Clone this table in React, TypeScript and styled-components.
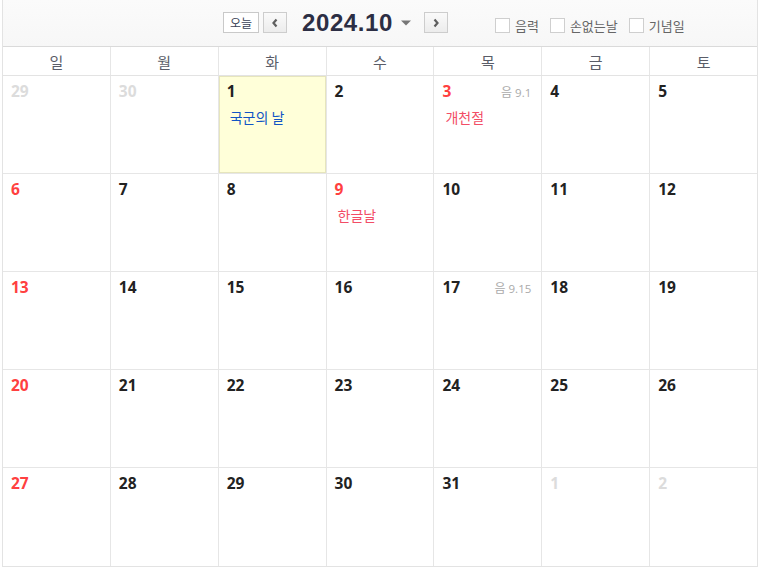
import React from 'react';
import styled, { createGlobalStyle } from 'styled-components';

const Global = createGlobalStyle`
  html, body { margin: 0; padding: 0; background: #fff; }
  body { font-family: "Open Sans", "Noto Sans CJK KR", sans-serif; }
`;

const Page = styled.div`
  padding-left: 2px;
`;

const Calendar = styled.div`
  width: 756px;
  box-sizing: border-box;
  border-left: 1px solid #e3e3e3;
  border-right: 1px solid #e3e3e3;
  border-bottom: 1px solid #e3e3e3;
`;

const Header = styled.div`
  height: 47px;
  box-sizing: border-box;
  border-bottom: 1px solid #dadada;
  background: linear-gradient(#fbfbfb, #f7f7f7);
  display: flex;
  align-items: center;
  padding-left: 220px;
`;

const Nav = styled.div`
  display: flex;
  align-items: center;
  margin-top: -1px;
`;

const TodayButton = styled.button`
  width: 36px;
  height: 21px;
  box-sizing: border-box;
  border: 1px solid #c9c9c9;
  background: #fff;
  font: 12px "Noto Sans CJK KR", sans-serif;
  color: #3a3f55;
  padding: 0;
  line-height: 19px;
  cursor: pointer;
`;

const ArrowButton = styled.button<{ $gap: number }>`
  width: 24px;
  height: 21px;
  box-sizing: border-box;
  border: 1px solid #cdcdcd;
  background: linear-gradient(#fafafa, #ececec);
  margin-left: ${p => p.$gap}px;
  padding: 0;
  display: flex;
  align-items: center;
  justify-content: center;
  cursor: pointer;
`;

const Title = styled.div`
  margin-left: 15px;
  font: 700 24px "Liberation Sans", Arial, sans-serif;
  letter-spacing: 0.6px;
  color: #2c2e44;
  line-height: 28px;
`;

const Caret = styled.span`
  display: flex;
  margin-left: 8px;
`;

const Options = styled.div`
  display: flex;
  align-items: center;
  margin-left: 47px;
  margin-top: 4px;
  gap: 11px;
`;

const Option = styled.label`
  display: flex;
  align-items: center;
  gap: 5px;
  font: 13px "Noto Sans CJK KR", sans-serif;
  color: #666;
`;

const Box = styled.span`
  width: 15px;
  height: 15px;
  box-sizing: border-box;
  border: 1px solid #cfcfcf;
  background: #fff;
  display: inline-block;
`;

const Grid = styled.div<{ $rows: string }>`
  display: grid;
  grid-template-columns: repeat(7, 1fr);
  grid-template-rows: ${p => p.$rows};
  gap: 1px;
  background: #e6e6e6;
`;

const DayNames = styled(Grid)`
  border-bottom: 1px solid #e3e3e3;
`;

const DayName = styled.div`
  background: #fff;
  display: flex;
  align-items: center;
  justify-content: center;
  font: 15px "Noto Sans CJK KR", sans-serif;
  color: #5a5d68;
`;

const Cell = styled.div<{ $today?: boolean }>`
  background: ${p => (p.$today ? '#ffffd9' : '#fff')};
  box-shadow: ${p => (p.$today ? 'inset 0 0 0 1px #e6e5bd' : 'none')};
  padding: 4px 10px 0 8px;
  box-sizing: border-box;
`;

const DateRow = styled.div`
  display: flex;
  justify-content: space-between;
  align-items: center;
  height: 22px;
`;

const tones: Record<string, string> = {
  normal: '#222',
  red: '#ff4040',
  muted: '#dcdcdc',
};

const DateNum = styled.span<{ $tone: string }>`
  font: 700 15.5px "Open Sans", "Noto Sans CJK KR", sans-serif;
  color: ${p => tones[p.$tone]};
`;

const Lunar = styled.span`
  font: 12px "Noto Sans CJK KR", sans-serif;
  color: #aaa;
  & b {
    font: 11.5px "Open Sans", sans-serif;
    margin-left: 3px;
  }
`;

const Holiday = styled.div<{ $color: string }>`
  margin-top: 5px;
  padding-left: 3px;
  font: 14px "Noto Sans CJK KR", sans-serif;
  line-height: 20px;
  color: ${p => p.$color};
`;

type Day = {
  n: number;
  tone: 'normal' | 'red' | 'muted';
  today?: boolean;
  holiday?: { text: string; color: string };
  lunar?: string;
};

const weeks: Day[][] = (() => {
  const list: Day[] = [];
  list.push({ n: 29, tone: 'muted' }, { n: 30, tone: 'muted' });
  for (let d = 1; d <= 31; d++) {
    const idx = list.length;
    const sunday = idx % 7 === 0;
    const day: Day = { n: d, tone: sunday ? 'red' : 'normal' };
    if (d === 1) {
      day.today = true;
      day.holiday = { text: '국군의 날', color: '#1155c5' };
    }
    if (d === 3) {
      day.tone = 'red';
      day.lunar = '9.1';
      day.holiday = { text: '개천절', color: '#f24d66' };
    }
    if (d === 9) {
      day.tone = 'red';
      day.holiday = { text: '한글날', color: '#f24d66' };
    }
    if (d === 17) day.lunar = '9.15';
    list.push(day);
  }
  list.push({ n: 1, tone: 'muted' }, { n: 2, tone: 'muted' });
  const out: Day[][] = [];
  for (let i = 0; i < list.length; i += 7) out.push(list.slice(i, i + 7));
  return out;
})();

const Chevron = ({ dir }: { dir: 'left' | 'right' }) => (
  <svg width="8" height="10" viewBox="0 0 8 10">
    <polyline
      points={dir === 'left' ? '5.5,1.5 2.5,5 5.5,8.5' : '2.5,1.5 5.5,5 2.5,8.5'}
      fill="none"
      stroke="#5e5e5e"
      strokeWidth="2.2"
    />
  </svg>
);

export default function App() {
  const names = ['일', '월', '화', '수', '목', '금', '토'];
  return (
    <Page>
      <Global />
      <Calendar>
        <Header>
          <Nav>
            <TodayButton>오늘</TodayButton>
            <ArrowButton $gap={4}>
              <Chevron dir="left" />
            </ArrowButton>
            <Title>2024.10</Title>
            <Caret>
              <svg width="10" height="6" viewBox="0 0 10 6">
                <polygon points="0,0.5 10,0.5 5,5.5" fill="#777" />
              </svg>
            </Caret>
            <ArrowButton $gap={13}>
              <Chevron dir="right" />
            </ArrowButton>
          </Nav>
          <Options>
            <Option>
              <Box />
              음력
            </Option>
            <Option>
              <Box />
              손없는날
            </Option>
            <Option>
              <Box />
              기념일
            </Option>
          </Options>
        </Header>
        <DayNames $rows="28px">
          {names.map(n => (
            <DayName key={n}>{n}</DayName>
          ))}
        </DayNames>
        <Grid $rows="repeat(4, 97px) 98px">
          {weeks.flat().map((d, i) => (
            <Cell key={i} $today={d.today}>
              <DateRow>
                <DateNum $tone={d.tone}>{d.n}</DateNum>
                {d.lunar && (
                  <Lunar>
                    음<b>{d.lunar}</b>
                  </Lunar>
                )}
              </DateRow>
              {d.holiday && <Holiday $color={d.holiday.color}>{d.holiday.text}</Holiday>}
            </Cell>
          ))}
        </Grid>
      </Calendar>
    </Page>
  );
}
